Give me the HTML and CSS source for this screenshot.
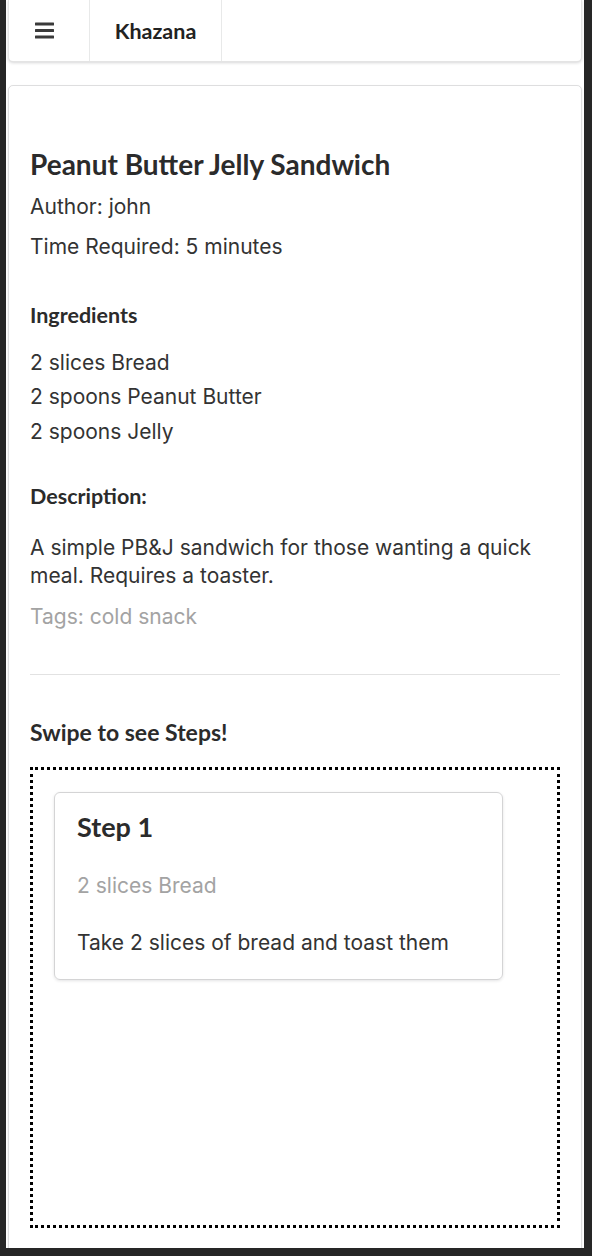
FILE: index.html
```html
<!DOCTYPE html>
<html lang="en">
<head>
<meta charset="utf-8">
<title>Khazana</title>
<link rel="stylesheet" href="styles.css">
</head>
<body>
<div class="page">
  <nav class="menu">
    <div class="menu-item menu-icon">
      <svg width="20" height="17" viewBox="0 0 20 17" aria-hidden="true">
        <rect x="0" y="0.5" width="19" height="3" rx="0.5" fill="#3a3a3a"/>
        <rect x="0" y="7" width="19" height="3" rx="0.5" fill="#3a3a3a"/>
        <rect x="0" y="13.5" width="19" height="3" rx="0.5" fill="#3a3a3a"/>
      </svg>
    </div>
    <div class="menu-item menu-brand">Khazana</div>
  </nav>

  <main class="segment">
    <h1 class="recipe-title">Peanut Butter Jelly Sandwich</h1>
    <p class="meta">Author: john</p>
    <p class="meta meta-time">Time Required: 5 minutes</p>

    <h3 class="section-title ingredients-title">Ingredients</h3>
    <ul class="ingredients">
      <li>2 slices Bread</li>
      <li>2 spoons Peanut Butter</li>
      <li>2 spoons Jelly</li>
    </ul>

    <h3 class="section-title description-title">Description:</h3>
    <p class="description">A simple PB&amp;J sandwich for those wanting a quick meal. Requires a toaster.</p>
    <p class="tags">Tags: cold snack</p>

    <hr class="divider">

    <h3 class="section-title swipe-title">Swipe to see Steps!</h3>
    <div class="steps">
      <div class="step-card">
        <h2 class="step-title">Step 1</h2>
        <p class="step-ingredient">2 slices Bread</p>
        <p class="step-text">Take 2 slices of bread and toast them</p>
      </div>
    </div>
  </main>
</div>
</body>
</html>
```

FILE: styles.css
```css
html, body {
  margin: 0;
  padding: 0;
}

body {
  background: #262626;
  height: 1256px;
  overflow: hidden;
  font-family: "Inter", "Liberation Sans", sans-serif;
  color: #333333;
}

.page {
  background: #ffffff;
  margin: 0 8px 0 6px;
  padding: 0 2px;
  height: 1248px;
  overflow: hidden;
  box-sizing: border-box;
}

.menu {
  display: flex;
  height: 62px;
  box-sizing: border-box;
  border: 1px solid rgba(34, 36, 38, 0.12);
  border-top: none;
  border-radius: 0 0 5px 5px;
  box-shadow: 0 1px 3px rgba(34, 36, 38, 0.18);
  background: #fff;
}

.menu-item {
  display: flex;
  align-items: center;
  border-right: 1px solid rgba(34, 36, 38, 0.1);
}

.menu-icon {
  width: 81px;
  padding-left: 26px;
  box-sizing: border-box;
}

.menu-icon svg {
  display: block;
}

.menu-brand {
  width: 132px;
  justify-content: center;
  box-sizing: border-box;
  font-family: "Lato", sans-serif;
  font-weight: 700;
  font-size: 21.5px;
  color: #222;
}

.segment {
  margin-top: 23px;
  border: 1px solid rgba(34, 36, 38, 0.15);
  border-radius: 5px;
  box-shadow: 0 1px 2px rgba(34, 36, 38, 0.12);
  padding: 63px 21px 40px 21px;
  min-height: 1300px;
}

.recipe-title {
  margin: 0;
  font-family: "Lato", sans-serif;
  font-weight: 700;
  font-size: 28px;
  line-height: 30px;
  color: #2b2b2b;
}

.meta {
  margin: 14px 0 0;
  font-size: 21px;
  line-height: 28px;
}

.meta-time {
  margin-top: 12px;
}

.section-title {
  margin: 0;
  font-family: "Lato", sans-serif;
  font-weight: 700;
  font-size: 21.5px;
  line-height: 26px;
  color: #2b2b2b;
}

.ingredients-title {
  margin-top: 41px;
}

.ingredients {
  list-style: none;
  margin: 17.75px 0 0;
  padding: 0;
  font-size: 21px;
  line-height: 34.5px;
}

.description-title {
  margin-top: 33.75px;
}

.description {
  margin: 25px 0 0;
  font-size: 21px;
  line-height: 28px;
}

.tags {
  margin: 13px 0 0;
  font-size: 21px;
  line-height: 28px;
  color: #a3a3a3;
}

.divider {
  margin: 43px 0 0;
  border: none;
  border-top: 1px solid #e2e2e2;
  height: 0;
}

.swipe-title {
  margin-top: 44px;
  font-size: 23px;
}

.steps {
  margin-top: 22px;
  height: 461px;
  box-sizing: border-box;
  border: 3px dotted #000;
  padding: 22px 54px 0 21px;
}

.step-card {
  border: 1px solid #d4d4d5;
  border-radius: 6px;
  box-shadow: 0 1px 3px rgba(34, 36, 38, 0.12);
  padding: 19px 22px 22px 22px;
}

.step-title {
  margin: 0;
  font-family: "Lato", sans-serif;
  font-weight: 700;
  font-size: 27px;
  line-height: 30px;
  color: #2b2b2b;
}

.step-ingredient {
  margin: 30px 0 0;
  font-size: 21px;
  line-height: 28px;
  color: #a3a3a3;
}

.step-text {
  margin: 29px 0 0;
  font-size: 21px;
  line-height: 28px;
}
```
